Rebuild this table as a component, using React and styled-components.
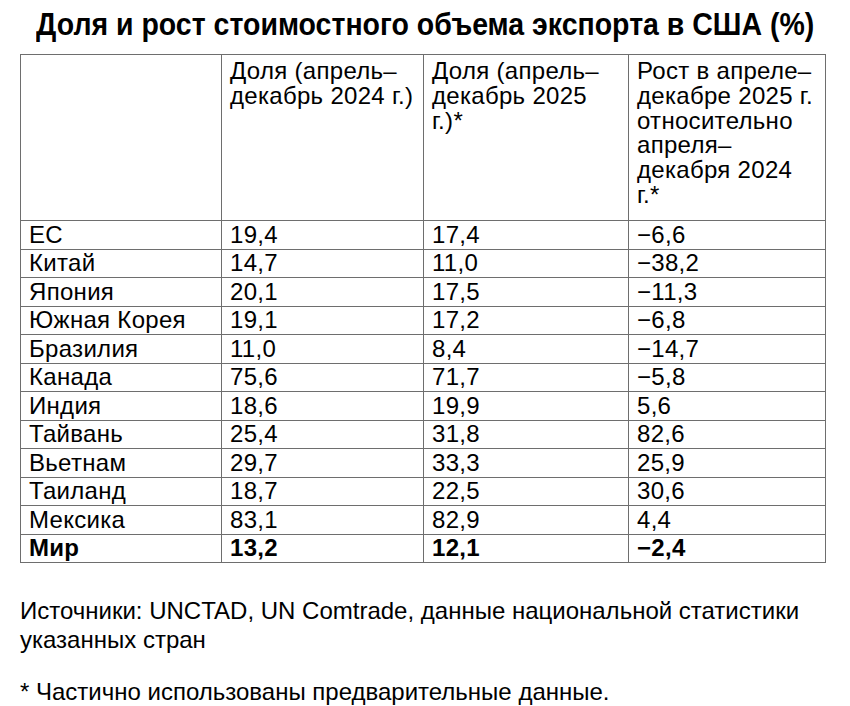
import React from "react";
import styled, { createGlobalStyle } from "styled-components";

const rows = [
  ["ЕС", "19,4", "17,4", "−6,6"],
  ["Китай", "14,7", "11,0", "−38,2"],
  ["Япония", "20,1", "17,5", "−11,3"],
  ["Южная Корея", "19,1", "17,2", "−6,8"],
  ["Бразилия", "11,0", "8,4", "−14,7"],
  ["Канада", "75,6", "71,7", "−5,8"],
  ["Индия", "18,6", "19,9", "5,6"],
  ["Тайвань", "25,4", "31,8", "82,6"],
  ["Вьетнам", "29,7", "33,3", "25,9"],
  ["Таиланд", "18,7", "22,5", "30,6"],
  ["Мексика", "83,1", "82,9", "4,4"],
];

const total = ["Мир", "13,2", "12,1", "−2,4"];

const App = () => {
  return (
    <Page>
      <GlobalStyle />
      <TitleBar>
        <Title>Доля и рост стоимостного объема экспорта в США (%)</Title>
      </TitleBar>
      <Table>
        <colgroup>
          <col style={{ width: 201 }} />
          <col style={{ width: 202 }} />
          <col style={{ width: 205 }} />
          <col style={{ width: 197 }} />
        </colgroup>
        <thead>
          <HeadRow>
            <HeadCell />
            <HeadCell>
              Доля (апрель–
              <br />
              декабрь 2024 г.)
            </HeadCell>
            <HeadCell>
              Доля (апрель–
              <br />
              декабрь 2025
              <br />
              г.)*
            </HeadCell>
            <HeadCell>
              Рост в апреле–
              <br />
              декабре 2025 г.
              <br />
              относительно
              <br />
              апреля–
              <br />
              декабря 2024
              <br />
              г.*
            </HeadCell>
          </HeadRow>
        </thead>
        <tbody>
          {rows.map(row => (
            <Row key={row[0]}>
              {row.map((value, i) => (
                <Cell key={i}>{value}</Cell>
              ))}
            </Row>
          ))}
          <Row>
            {total.map((value, i) => (
              <Cell key={i} bold>
                {value}
              </Cell>
            ))}
          </Row>
        </tbody>
      </Table>
      <Notes>
        <Note>
          Источники: UNCTAD, UN Comtrade, данные национальной статистики
          <br />
          указанных стран
        </Note>
        <Note>* Частично использованы предварительные данные.</Note>
      </Notes>
    </Page>
  );
};

export default App;

const GlobalStyle = createGlobalStyle`
  body {
    margin: 0;
    background: #ffffff;
    color: #000000;
    font-family: "Liberation Sans", Arial, sans-serif;
  }
`;

const Page = styled.div`
  width: 850px;
  height: 706px;
  overflow: hidden;
  background: #ffffff;
  padding-top: 6px;
  box-sizing: border-box;
`;

const TitleBar = styled.div`
  display: flex;
  justify-content: center;
  height: 48px;
`;

// the source uses a bold condensed face, squeeze the bold sans to match
const Title = styled.h1`
  margin: 0;
  white-space: nowrap;
  font-family: "Liberation Sans", Arial, sans-serif;
  font-weight: bold;
  font-size: 32px;
  line-height: 36px;
  transform: scaleX(0.89);
  transform-origin: center;
`;

const Table = styled.table`
  margin-left: 20px;
  width: 805px;
  border-collapse: collapse;
  table-layout: fixed;
  font-size: 24px;
  letter-spacing: 0.3px;
`;

const HeadRow = styled.tr`
  height: 166px;
`;

const HeadCell = styled.th`
  border: 1px solid #6e6e6e;
  vertical-align: top;
  text-align: left;
  font-weight: normal;
  padding: 4px 8px 0 8px;
  line-height: 24.8px;
`;

const Row = styled.tr`
  height: 28.5px;
`;

const Cell = styled.td`
  border: 1px solid #6e6e6e;
  padding: 0 8px;
  line-height: 26px;
  font-weight: ${({ bold }) => (bold ? "bold" : "normal")};
  white-space: nowrap;
`;

const Notes = styled.div`
  padding: 33px 20px 0;
  font-size: 24px;
  line-height: 29px;
`;

const Note = styled.p`
  margin: 0 0 23px;
`;
